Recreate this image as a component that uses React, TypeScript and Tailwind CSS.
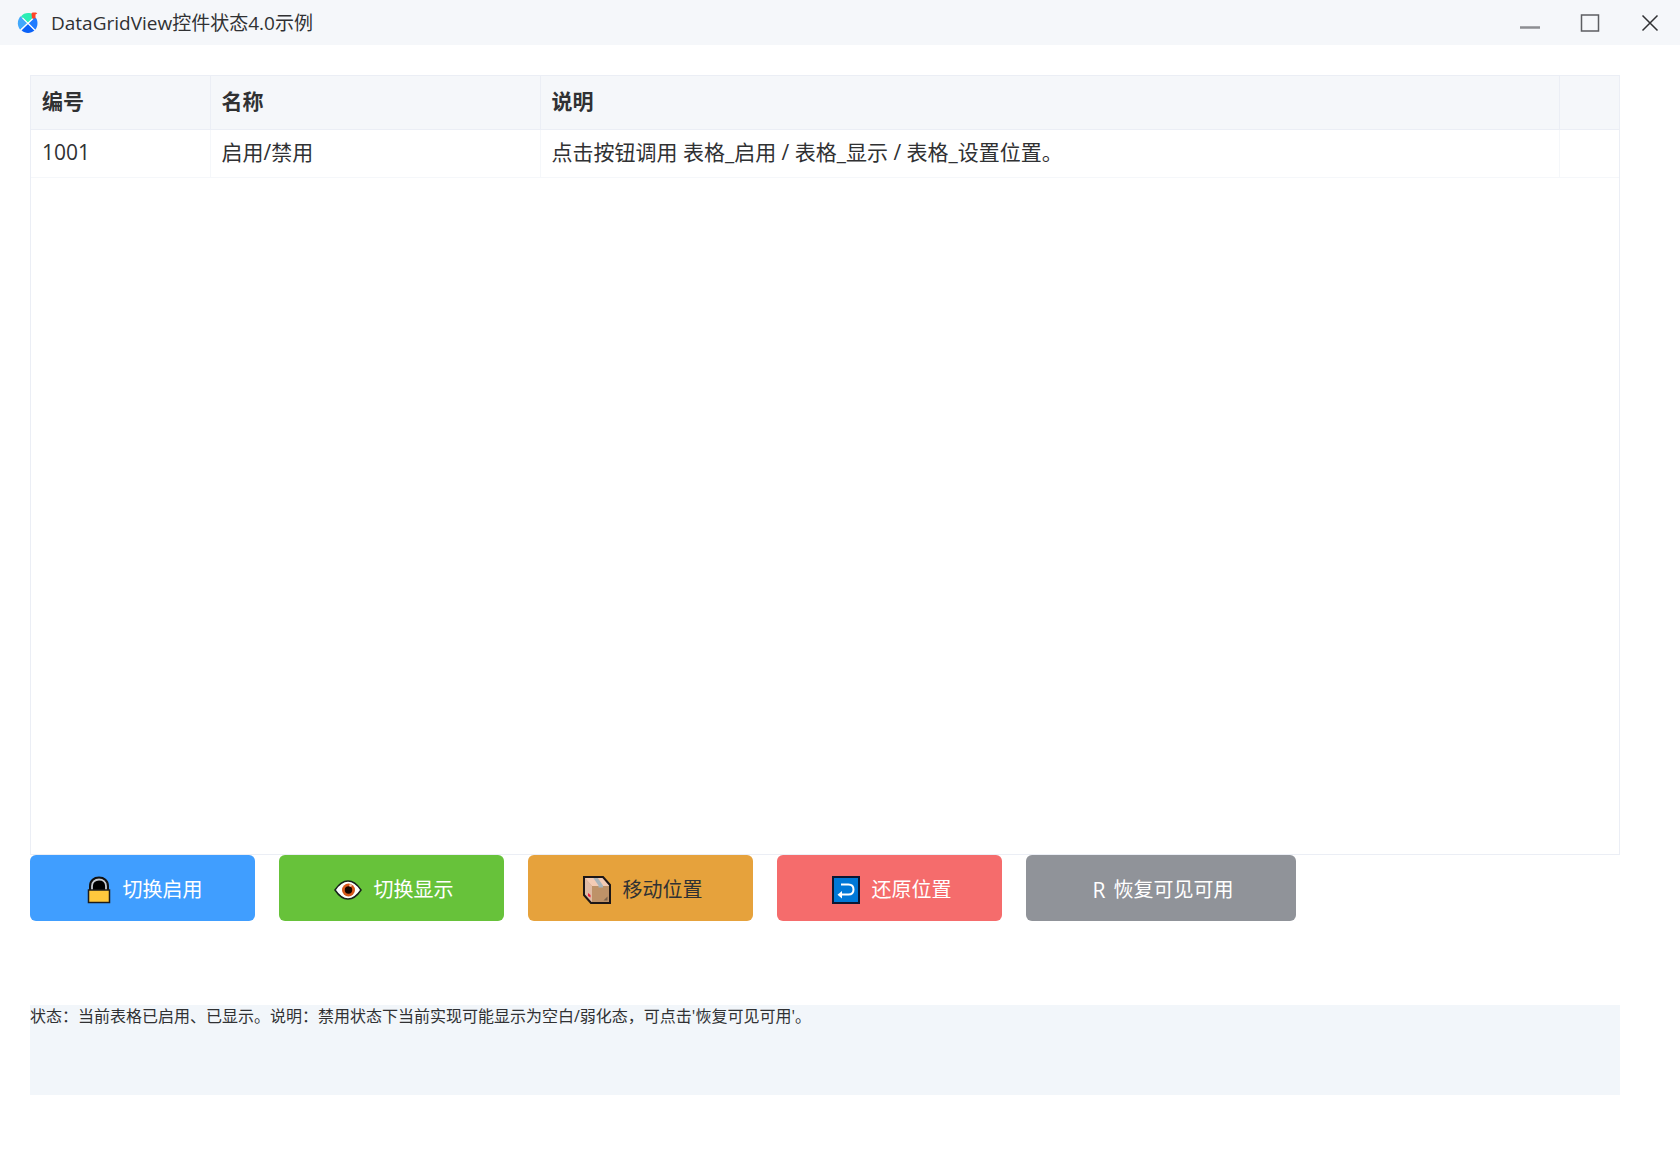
import { useState } from "react";

const COLUMNS = [
  { key: "id", label: "编号", col: "w-[179px]" },
  { key: "name", label: "名称", col: "w-[330px]" },
  { key: "desc", label: "说明", col: "" },
  { key: "extra", label: "", col: "w-[60px]" },
];

const ROWS: Record<string, string>[] = [
  { id: "1001", name: "启用/禁用", desc: "点击按钮调用 表格_启用 / 表格_显示 / 表格_设置位置。", extra: "" },
];

const DEFAULT_STATUS =
  "状态：当前表格已启用、已显示。说明：禁用状态下当前实现可能显示为空白/弱化态，可点击'恢复可见可用'。";

function AppLogo() {
  return (
    <svg className="w-[22px] h-[22px]" viewBox="0 0 22 22" aria-hidden="true">
      <path d="M11 11L4 4.500C5.500 2 8.500 1 11 1c2 0 3.200.4 4.300 1L15.500 6.500z" fill="#2bedb5" />
      <path d="M10.500 11L3.600 4.300C.2 8-.2 13.500 3.200 17.700z" fill="#41a8fb" />
      <path d="M11.500 11l5.200-5.200h2.200c2.400 3.800 2 8.700-.7 12z" fill="#1f7bff" />
      <path d="M11 11.500l6.500 6.700c-3.700 3.600-9.300 3.600-13 0z" fill="#0a62f8" />
      <path d="M5.500 5.800l12.300 12.300M16 6.500L3.800 18" stroke="#fff" strokeWidth="1.200" />
      <path d="M14.500 1.500L15.500.5h3.500l1.300 1-1.800 1v4h-3.500z" fill="#ff4326" />
    </svg>
  );
}

function LockIcon() {
  return (
    <svg className="w-6 h-7" viewBox="0 0 24 28" aria-hidden="true">
      <path d="M3 15V10C3 4.500 7 1.500 12 1.500S21 4.500 21 10v5z" fill="#000" stroke="#111" strokeWidth="2" />
      <path d="M5 14v-4c0-4 3-6.500 7-6.500s7 2.500 7 6.500v4" fill="none" stroke="#c7cbd1" strokeWidth="1.800" />
      <path d="M1.500 14h21v12.500h-21z" fill="#ffc83d" stroke="#1c1c1c" strokeWidth="1.500" />
    </svg>
  );
}

function EyeIcon() {
  return (
    <svg className="w-7 h-7" viewBox="0 0 28 28" aria-hidden="true">
      <path d="M1 14C5 8 9.500 5 14 5S23 8 27 14c-4 6-8.500 9-13 9S5 20 1 14z" fill="#fff" stroke="#16211a" strokeWidth="1.500" />
      <circle cx="14.500" cy="14" r="6.500" fill="#d45719" />
      <circle cx="14.500" cy="14" r="3.700" fill="#160600" />
      <circle cx="16.500" cy="9.500" r="1.300" fill="#f7c9ae" />
    </svg>
  );
}

function PackageIcon() {
  return (
    <svg className="w-7 h-7" viewBox="0 0 28 28" aria-hidden="true">
      <path d="M1 1h19l7 8v18H8l-7-8z" fill="#be9268" />
      <path d="M1 1l8 9v17l-8-8z" fill="#e0bba5" />
      <path d="M1 1h19l7 9H9z" fill="#f3cbb5" />
      <path d="M10 1.500h4.500L20 9.500v2h-4.500v-2z" fill="#a9b4ba" />
      <path d="M5 17l2.500 2v2.500L5 20z" fill="#ee2340" />
      <path d="M20.500 24.500l4-4v4z" fill="#7b634d" />
      <path d="M1 1h19l7 8v18H8l-7-8z" fill="none" stroke="#1d1717" strokeWidth="2" />
    </svg>
  );
}

function ReturnIcon() {
  return (
    <svg className="w-7 h-7" viewBox="0 0 28 28" aria-hidden="true">
      <path d="M1 1h26v26H1z" fill="#0078d7" stroke="#0c1733" strokeWidth="2" />
      <path d="M9 8.500h7.500c3 0 5 2 5 5s-2 5-5 5H8" fill="none" stroke="#fff" strokeWidth="2" />
      <path d="M10 15v7.500l-4.500-3.700z" fill="#fff" />
    </svg>
  );
}

export default function App() {
  const [enabled, setEnabled] = useState(true);
  const [visible, setVisible] = useState(true);
  const [moved, setMoved] = useState(false);

  const restore = () => {
    setEnabled(true);
    setVisible(true);
    setMoved(false);
  };

  const actions = [
    { label: "切换启用", icon: <LockIcon />, style: "w-[225px] gap-3 bg-[#409eff] text-white", run: () => setEnabled((v) => !v) },
    { label: "切换显示", icon: <EyeIcon />, style: "w-[225px] gap-3 bg-[#67c23a] text-white", run: () => setVisible((v) => !v) },
    { label: "移动位置", icon: <PackageIcon />, style: "w-[225px] gap-3 bg-[#e6a23c] text-[#303133]", run: () => setMoved(true) },
    { label: "还原位置", icon: <ReturnIcon />, style: "w-[225px] gap-3 bg-[#f56c6c] text-white", run: () => setMoved(false) },
    { label: "恢复可见可用", icon: <span className="text-[21px]">R</span>, style: "w-[270px] gap-2 bg-[#909399] text-white", run: restore },
  ];

  return (
    <div className="min-h-screen bg-white font-['Open_Sans','Noto_Sans_CJK_SC',sans-serif] text-[#303133]">
      {/* Title bar */}
      <header className="flex items-center justify-between h-[45px] pl-[17px] bg-[#f5f7fa]">
        <div className="flex items-center gap-3">
          <AppLogo />
          <h1 className="text-[19px] leading-7">DataGridView控件状态4.0示例</h1>
        </div>
        <div className="flex">
          <button aria-label="最小化" className="flex items-center justify-center w-[60px] h-[45px] hover:bg-black/5">
            <svg className="w-5 h-5" viewBox="0 0 20 20">
              <path d="M0 14.500h20" stroke="#8c8e92" strokeWidth="2.500" />
            </svg>
          </button>
          <button aria-label="最大化" className="flex items-center justify-center w-[60px] h-[45px] hover:bg-black/5">
            <svg className="w-5 h-5" viewBox="0 0 20 20">
              <path d="M1.500 2h17v16h-17z" fill="none" stroke="#5c5e62" strokeWidth="1.500" />
            </svg>
          </button>
          <button aria-label="关闭" className="flex items-center justify-center w-[60px] h-[45px] hover:bg-black/5">
            <svg className="w-5 h-5" viewBox="0 0 20 20">
              <path d="M2.500 2.500l15 15M17.500 2.500l-15 15" stroke="#303133" strokeWidth="1.500" />
            </svg>
          </button>
        </div>
      </header>

      <main className="pl-[30px] pr-[60px] pt-[30px]">
        {/* Data grid */}
        <div className={`h-[780px] border border-[#ebeef5] ${visible ? "" : "invisible"} ${enabled ? "" : "opacity-50"} ${moved ? "ml-8" : ""}`}>
          <table className="w-full table-fixed border-collapse text-left text-[21px] leading-7">
            <colgroup>
              {COLUMNS.map((c) => (
                <col key={c.key} className={c.col} />
              ))}
            </colgroup>
            <thead>
              <tr className="h-[53px] bg-[#f5f7fa]">
                {COLUMNS.map((c) => (
                  <th key={c.key} className="px-[11px] pb-0.5 border-b border-r border-[#ebeef5] last:border-r-0 font-bold">
                    {c.label}
                  </th>
                ))}
              </tr>
            </thead>
            <tbody>
              {ROWS.map((row) => (
                <tr key={row.id} className="h-12">
                  {COLUMNS.map((c) => (
                    <td key={c.key} className="px-[11px] pb-0.5 border-b border-r border-[#f5f7fa] last:border-r-0 whitespace-nowrap">
                      {row[c.key]}
                    </td>
                  ))}
                </tr>
              ))}
            </tbody>
          </table>
        </div>

        {/* Actions */}
        <div className="flex gap-6">
          {actions.map((a) => (
            <button
              key={a.label}
              onClick={a.run}
              className={`flex items-center justify-center h-[66px] pt-1 pl-1 rounded-md text-[20px] leading-7 ${a.style}`}
            >
              {a.icon}
              <span>{a.label}</span>
            </button>
          ))}
        </div>

        <p className="mt-[84px] h-[90px] bg-[#f2f6fa] text-[16px] leading-[22px]">{DEFAULT_STATUS}</p>
      </main>
    </div>
  );
}
